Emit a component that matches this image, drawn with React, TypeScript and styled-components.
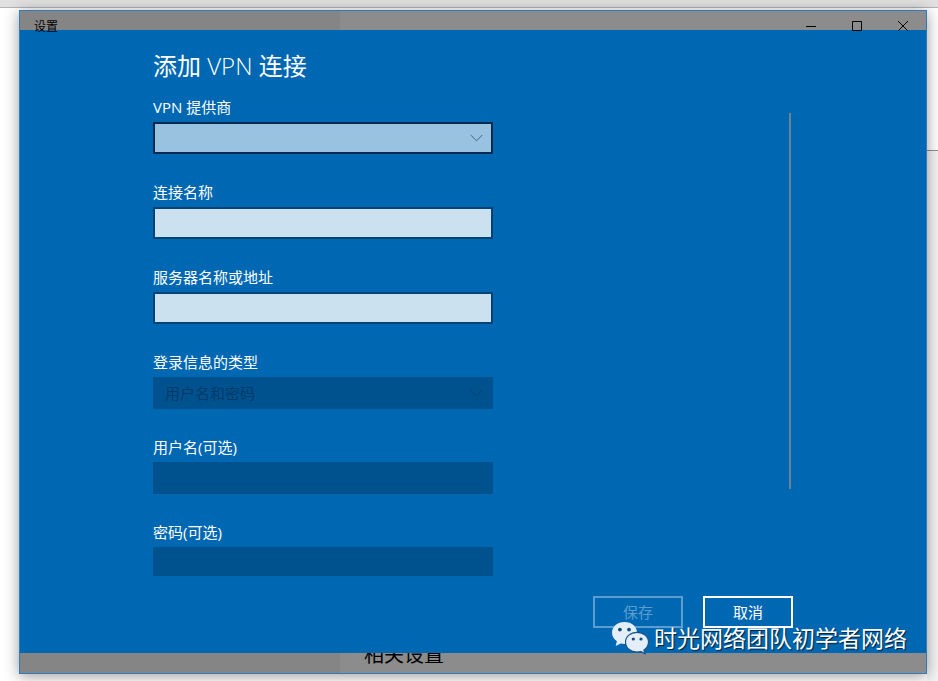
import React, { useState } from "react";
import styled, { createGlobalStyle } from "styled-components";

const GlobalStyle = createGlobalStyle`
  *, *::before, *::after { box-sizing: border-box; }
  body {
    margin: 0;
    background: #f4f4f4;
    font-family: "Open Sans", "Noto Sans CJK SC", sans-serif;
  }
`;

const Desktop = styled.div`
  display: flex;
  flex-direction: column;
  height: 100vh;
  overflow: hidden;
  background: #ffffff;
`;

const DesktopBar = styled.div`
  flex: none;
  height: 8px;
  background: #e1e1e1;
  border-bottom: 1px solid #b4b4b4;
`;

const DesktopBody = styled.div`
  flex: 1;
  min-height: 0;
  display: flex;
  padding-left: 19px;
`;

const Gutter = styled.div`
  flex: none;
  width: 11px;
  background: #f4f4f4;
`;

const GutterTop = styled.div`
  height: 143px;
  background: #ffffff;
  border-bottom: 1px solid #909090;
`;

const Window = styled.div`
  position: relative;
  z-index: 1;
  flex: 1;
  min-width: 0;
  display: flex;
  flex-direction: column;
  margin: 2px 0 7px;
  border: 1px solid #2c7cbe;
  background: linear-gradient(to right, #858585 320px, #8c8c8c 320px);
  box-shadow: 0 2px 14px rgba(0, 0, 0, 0.4);
`;

const TitleBar = styled.header`
  position: relative;
  z-index: 1;
  flex: none;
  height: 19px;
  display: flex;
  justify-content: space-between;
  align-items: flex-start;
  padding-left: 14px;
`;

const WindowTitle = styled.span`
  padding-top: 7px;
  font-size: 12px;
  line-height: 18px;
  color: #000000;
`;

const WindowControls = styled.div`
  display: flex;
`;

const WindowButton = styled.button`
  width: 46px;
  height: 30px;
  padding: 0;
  border: 0;
  background: transparent;
  display: flex;
  align-items: center;
  justify-content: center;
`;

const Dialog = styled.form`
  flex: 1;
  min-height: 0;
  display: flex;
  flex-direction: column;
  padding: 18px 133px 25px;
  background: #0067b3;
  color: #ffffff;
`;

const DialogTitle = styled.h1`
  margin: 0 0 13px;
  font-size: 24px;
  line-height: 36px;
  font-weight: 400;
`;

const LightText = styled.span`
  font-weight: 300;
`;

const ScrollArea = styled.div`
  flex: 1;
  min-height: 0;
  display: flex;
  justify-content: space-between;
  align-items: flex-start;
  padding-right: 2px;
  overflow: hidden;
`;

const Fields = styled.div`
  flex: 0 1 340px;
  display: flex;
  flex-direction: column;
  gap: 28px;
`;

const ScrollThumb = styled.div`
  width: 2px;
  height: 376px;
  margin-top: 16px;
  background: #6b8494;
`;

const Field = styled.div`
  display: flex;
  flex-direction: column;
  gap: 5px;
`;

const Label = styled.label`
  font-size: 15px;
  line-height: 20px;
`;

const TextInput = styled.input`
  width: 100%;
  height: 32px;
  padding: 0 10px;
  border: 2px solid #004377;
  border-radius: 0;
  outline: 0;
  background: #cce1f0;
  color: #000000;
  font: inherit;
  font-size: 15px;

  &:disabled {
    border-color: #00528f;
    background: #00528f;
  }
`;

const SelectBox = styled.div`
  position: relative;
  display: flex;
`;

const Select = styled.select`
  appearance: none;
  width: 100%;
  height: 32px;
  padding: 0 32px 0 10px;
  border: 2px solid #002a50;
  border-radius: 0;
  outline: 0;
  background: #99c2e1;
  color: #000000;
  font: inherit;
  font-size: 15px;

  &:disabled {
    opacity: 1;
    border-color: #00528f;
    background: #00528f;
    color: #003a69;
  }
`;

const Chevron = styled.svg<{ $muted?: boolean }>`
  position: absolute;
  right: 10px;
  top: 12px;
  width: 13px;
  height: 8px;
  fill: none;
  stroke: ${(p) => (p.$muted ? "#003f70" : "#3d6485")};
  pointer-events: none;
`;

const Actions = styled.div`
  flex: none;
  display: flex;
  justify-content: flex-end;
  gap: 20px;
  padding-top: 20px;
`;

const ActionButton = styled.button`
  width: 90px;
  height: 32px;
  padding: 0;
  border: 2px solid #ffffff;
  background: transparent;
  color: #ffffff;
  font: inherit;
  font-size: 15px;
  line-height: 20px;

  &:disabled {
    border-color: #5c9ed0;
    color: #5c9ed0;
  }
`;

const BottomStrip = styled.footer`
  flex: none;
  height: 20px;
  display: flex;
  align-items: flex-end;
  padding: 0 0 3px 344px;
  overflow: hidden;
`;

const RelatedHeading = styled.span`
  font-size: 20px;
  line-height: 30px;
  color: #000000;
`;

const Watermark = styled.div`
  position: absolute;
  right: 19px;
  bottom: 18px;
  z-index: 2;
  display: flex;
  align-items: center;
  gap: 5px;
  color: #ffffff;
  font-size: 23px;
  line-height: 34px;
  text-shadow: 1px 1px 1px rgba(0, 0, 0, 0.7);
`;

const BubbleLogo = styled.svg`
  width: 38px;
  height: 34px;
`;

function ChevronIcon({ muted }: { muted?: boolean }) {
  return (
    <Chevron $muted={muted} viewBox="0 0 13 8" aria-hidden="true">
      <path d="M.7 1l5.800 5.800L12.300 1" strokeWidth="1" />
    </Chevron>
  );
}

function ChatLogo() {
  return (
    <BubbleLogo viewBox="0 0 38 34" aria-hidden="true">
      <path
        d="M13.500 1C6.300 1 1 5.700 1 11.800c0 3.600 1.900 6.500 4.900 8.500L4.700 25l5-2.600c1.300.3 2.500.5 3.800.5C20.700 22.900 26 18 26 11.800S20.700 1 13.500 1z"
        fill="#e3eef9"
      />
      <path
        d="M26 11.300c-6.400 0-11.500 4.300-11.500 9.900S19.600 31 26 31c1.300 0 2.500-.2 3.700-.5l4.300 2.300-1.100-3.800c2.800-1.900 4.600-4.700 4.600-7.800 0-5.600-5.100-9.900-11.500-9.900z"
        fill="#e3eef9"
        stroke="#17568a"
        strokeWidth="1.200"
      />
      <g fill="#174c78">
        <circle cx="8.900" cy="8.600" r="1.900" />
        <circle cx="18" cy="8.600" r="1.900" />
        <circle cx="22.300" cy="18" r="1.600" />
        <circle cx="30" cy="18" r="1.600" />
      </g>
    </BubbleLogo>
  );
}

interface TextFieldProps {
  id: string;
  label: string;
  type?: string;
  disabled?: boolean;
}

function TextField({ id, label, type = "text", disabled }: TextFieldProps) {
  const [value, setValue] = useState("");
  return (
    <Field>
      <Label htmlFor={id}>{label}</Label>
      <TextInput
        id={id}
        type={type}
        disabled={disabled}
        value={value}
        autoComplete="off"
        onChange={(e) => setValue(e.target.value)}
      />
    </Field>
  );
}

interface SelectFieldProps {
  id: string;
  label: string;
  option: string;
  disabled?: boolean;
}

function SelectField({ id, label, option, disabled }: SelectFieldProps) {
  return (
    <Field>
      <Label htmlFor={id}>{label}</Label>
      <SelectBox>
        <Select id={id} disabled={disabled}>
          <option>{option}</option>
        </Select>
        <ChevronIcon muted={disabled} />
      </SelectBox>
    </Field>
  );
}

export default function App() {
  return (
    <Desktop>
      <GlobalStyle />
      <DesktopBar />
      <DesktopBody>
        <Window>
          <TitleBar>
            <WindowTitle>设置</WindowTitle>
            <WindowControls>
              <WindowButton aria-label="最小化">
                <svg width="10" height="10" viewBox="0 0 10 10" stroke="#000">
                  <path d="M0 5.500h10" />
                </svg>
              </WindowButton>
              <WindowButton aria-label="最大化">
                <svg width="10" height="10" viewBox="0 0 10 10" fill="none" stroke="#000">
                  <path d="M.5.5h9v9h-9z" />
                </svg>
              </WindowButton>
              <WindowButton aria-label="关闭">
                <svg width="10" height="10" viewBox="0 0 10 10" stroke="#000">
                  <path d="M0 0l10 10M10 0L0 10" />
                </svg>
              </WindowButton>
            </WindowControls>
          </TitleBar>
          <Dialog onSubmit={(e) => e.preventDefault()}>
            <DialogTitle>
              添加 <LightText>VPN</LightText> 连接
            </DialogTitle>
            <ScrollArea>
              <Fields>
                <SelectField id="provider" label="VPN 提供商" option="" />
                <TextField id="name" label="连接名称" />
                <TextField id="server" label="服务器名称或地址" />
                <SelectField id="auth" label="登录信息的类型" option="用户名和密码" disabled />
                <TextField id="user" label="用户名(可选)" disabled />
                <TextField id="password" label="密码(可选)" type="password" disabled />
              </Fields>
              <ScrollThumb />
            </ScrollArea>
            <Actions>
              <ActionButton type="submit" disabled>
                保存
              </ActionButton>
              <ActionButton type="button">取消</ActionButton>
            </Actions>
          </Dialog>
          <BottomStrip>
            <RelatedHeading>相关设置</RelatedHeading>
          </BottomStrip>
          <Watermark>
            <ChatLogo />
            <span>时光网络团队初学者网络</span>
          </Watermark>
        </Window>
        <Gutter>
          <GutterTop />
        </Gutter>
      </DesktopBody>
    </Desktop>
  );
}
